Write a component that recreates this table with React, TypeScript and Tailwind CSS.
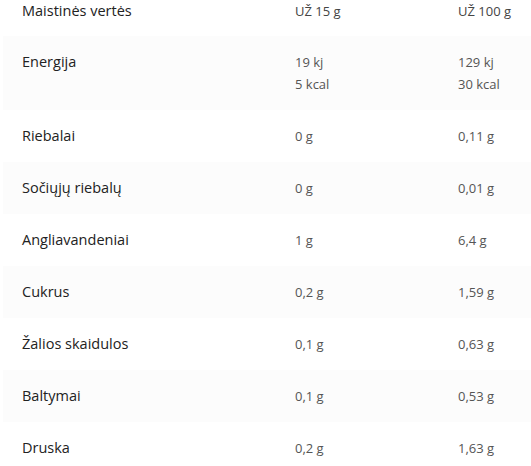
import React from 'react';

const rows: { label: string; per15: string[]; per100: string[] }[] = [
  { label: 'Energija', per15: ['19 kj', '5 kcal'], per100: ['129 kj', '30 kcal'] },
  { label: 'Riebalai', per15: ['0 g'], per100: ['0,11 g'] },
  { label: 'Sočiųjų riebalų', per15: ['0 g'], per100: ['0,01 g'] },
  { label: 'Angliavandeniai', per15: ['1 g'], per100: ['6,4 g'] },
  { label: 'Cukrus', per15: ['0,2 g'], per100: ['1,59 g'] },
  { label: 'Žalios skaidulos', per15: ['0,1 g'], per100: ['0,63 g'] },
  { label: 'Baltymai', per15: ['0,1 g'], per100: ['0,53 g'] },
  { label: 'Druska', per15: ['0,2 g'], per100: ['1,63 g'] },
];

const App: React.FC = () => {
  return (
    <div className="w-[531px] h-[466px] overflow-hidden bg-white font-['Open_Sans',sans-serif] text-[13px] leading-[22px]">
      <div className="mt-[-16px] pl-[3px]">
        <div className="grid grid-cols-[273px_163px_1fr] items-baseline pl-[19px] pt-[16px] pb-[14px]">
          <div className="text-[#222] text-[14.5px] font-medium">Maistinės vertės</div>
          <div className="text-[#444]">UŽ 15 g</div>
          <div className="text-[#444]">UŽ 100 g</div>
        </div>
        {rows.map((r, i) => (
          <div
            key={r.label}
            className={`grid grid-cols-[273px_163px_1fr] items-baseline pl-[19px] pt-[15px] pb-[15px] ${i % 2 === 0 ? 'bg-[#fcfcfc]' : 'bg-white'}`}
          >
            <div className="text-[#222] text-[14.5px] font-medium">{r.label}</div>
            <div className="text-[#555]">
              {r.per15.map(v => (
                <div key={v}>{v}</div>
              ))}
            </div>
            <div className="text-[#555]">
              {r.per100.map(v => (
                <div key={v}>{v}</div>
              ))}
            </div>
          </div>
        ))}
      </div>
    </div>
  );
};

export default App;
